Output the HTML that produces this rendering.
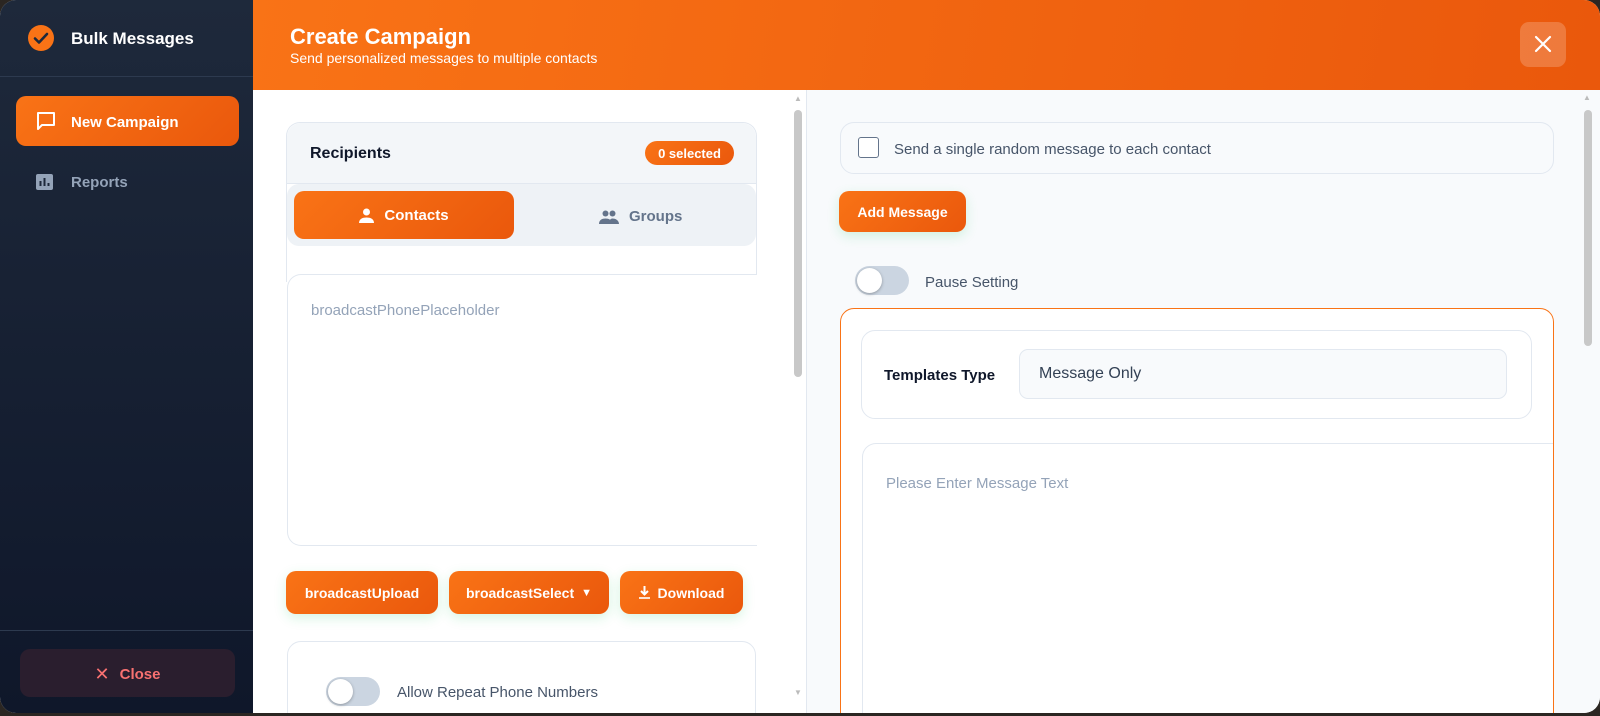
<!DOCTYPE html>
<html><head><meta charset="utf-8"><style>
*{box-sizing:border-box;margin:0;padding:0}
body{width:1600px;height:716px;overflow:hidden;background:#2b2622;font-family:"Liberation Sans",sans-serif;position:relative}
.win{position:absolute;left:0;top:0;width:1600px;height:713px;border-radius:16px;overflow:hidden;background:#fff}
.abs{position:absolute}
.side{left:0;top:0;width:253px;height:713px;background:linear-gradient(180deg,#1e293b,#0f172a)}
.og{background:linear-gradient(135deg,#f97316,#ea580c);color:#fff;font-weight:bold}
.btn{border-radius:10px;display:flex;align-items:center;justify-content:center;font-size:14px;box-shadow:0 4px 12px rgba(34,197,94,.18)}
.card{border:1px solid #e2e8f0;border-radius:14px}
.tog{width:54px;height:29px;border-radius:15px;background:#cbd5e1}
.tog::after{content:"";position:absolute;left:2px;top:2px;width:25px;height:25px;border-radius:50%;background:#fff;box-shadow:0 1px 3px rgba(0,0,0,.3)}
</style></head><body>
<div class="win">
<div class="abs side">
 <div class="abs" style="left:28px;top:25px;width:26px;height:26px;border-radius:50%;background:#f97316"><svg width="26" height="26" viewBox="0 0 26 26"><path d="M7 13.5l4 4 8-8.5" fill="none" stroke="#1e293b" stroke-width="2.6" stroke-linecap="round" stroke-linejoin="round"/></svg></div>
 <div class="abs" style="left:71px;top:29px;color:#fff;font-weight:bold;font-size:17px">Bulk Messages</div>
 <div class="abs" style="left:0;top:76px;width:253px;height:1px;background:#2d3a4f"></div>
 <div class="abs og" style="left:16px;top:96px;width:223px;height:50px;border-radius:10px;font-size:15px">
  <svg class="abs" style="left:20px;top:15px" width="20" height="20" viewBox="0 0 20 20"><path d="M2 2h16v12H6l-4 4z" fill="none" stroke="#fff" stroke-width="2" stroke-linejoin="round"/></svg>
  <span class="abs" style="left:55px;top:18px">New Campaign</span></div>
 <svg class="abs" style="left:36px;top:174px" width="17" height="16" viewBox="0 0 17 16"><rect width="17" height="16" rx="2" fill="#94a3b8"/><path d="M4.5 12V7M8.5 12V4M12.5 12V9" stroke="#1e293b" stroke-width="2"/></svg>
 <div class="abs" style="left:71px;top:174px;color:#94a3b8;font-size:15px;font-weight:bold">Reports</div>
 <div class="abs" style="left:0;top:630px;width:253px;height:1px;background:#2d3a4f"></div>
 <div class="abs" style="left:20px;top:649px;width:215px;height:48px;border-radius:10px;background:#2a1e2e;color:#f87171;font-size:15px;font-weight:bold;display:flex;align-items:center;justify-content:center;gap:10px;padding-top:3px"><span style="font-weight:normal;font-size:18px">✕</span>Close</div>
</div>
<div class="abs" style="left:253px;top:0;width:1347px;height:90px;background:linear-gradient(100deg,#f97316,#ea580c)">
 <div class="abs" style="left:37px;top:24px;color:#fff;font-weight:bold;font-size:22px">Create Campaign</div>
 <div class="abs" style="left:37px;top:50px;color:#fff;font-size:14px">Send personalized messages to multiple contacts</div>
 <div class="abs" style="left:1267px;top:22px;width:46px;height:45px;border-radius:9px;background:rgba(255,255,255,.2)"><svg width="46" height="45" viewBox="0 0 46 45"><path d="M16 15l14 14M30 15L16 29" stroke="#fff" stroke-width="2.2" stroke-linecap="round"/></svg></div>
</div>
<div class="abs" style="left:253px;top:90px;width:553px;height:623px;background:#fff">
 <div class="abs" style="left:541px;top:4px;color:#bbb;font-size:8px">▲</div>
 <div class="abs" style="left:541px;top:20px;width:8px;height:267px;border-radius:4px;background:#c8c8c8"></div>
 <div class="abs" style="left:541px;top:598px;color:#bbb;font-size:8px">▼</div>
</div>
<div class="abs" style="left:806px;top:90px;width:1px;height:623px;background:#e2e8f0"></div>
<div class="abs" style="left:286px;top:122px;width:471px;height:160px;border:1px solid #e2e8f0;border-bottom:none;border-radius:14px 14px 0 0;background:#fff"></div>
<div class="abs" style="left:287px;top:123px;width:469px;height:60px;background:#f3f6f9;border-radius:14px 14px 0 0"></div>
<div class="abs" style="left:287px;top:183px;width:470px;height:1px;background:#e2e8f0"></div>
<div class="abs" style="left:287px;top:184px;width:469px;height:62px;background:#eef2f6;border-radius:12px"></div>
<div class="abs" style="left:310px;top:145px;font-weight:bold;font-size:16px;color:#0f172a">Recipients</div>
<div class="abs og" style="left:645px;top:141px;width:89px;height:24px;border-radius:12px;font-size:13px;display:flex;align-items:center;justify-content:center">0 selected</div>
<div class="abs og btn" style="left:294px;top:191px;width:220px;height:48px;font-size:15px;box-shadow:none;gap:10px"><svg width="15" height="15" viewBox="0 0 15 15"><circle cx="7.5" cy="4" r="3.5" fill="#fff"/><path d="M0 15c0-4 3.5-5.5 7.5-5.5S15 11 15 15z" fill="#fff"/></svg>Contacts</div>
<div class="abs" style="left:599px;top:208px;display:flex;gap:10px;align-items:center;color:#64748b;font-weight:bold;font-size:15px"><svg width="20" height="14" viewBox="0 0 20 14"><circle cx="6.5" cy="3.5" r="3" fill="#64748b"/><circle cx="13.5" cy="3.5" r="3" fill="#64748b"/><path d="M0 14c0-4 3-5.5 6.5-5.5S13 10 13 14zM10 14c0-3 1-5.5 3.5-5.5S20 10 20 14z" fill="#64748b"/></svg>Groups</div>
<div class="abs card" style="left:287px;top:274px;width:470px;height:272px;border-right:none;border-radius:14px 0 0 14px;background:#fff"></div>
<div class="abs" style="left:311px;top:302px;color:#94a3b8;font-size:15px">broadcastPhonePlaceholder</div>
<div class="abs og btn" style="left:286px;top:571px;width:152px;height:43px">broadcastUpload</div>
<div class="abs og btn" style="left:449px;top:571px;width:160px;height:43px">broadcastSelect <span style="font-size:11px;margin-left:7px">▼</span></div>
<div class="abs og btn" style="left:620px;top:571px;width:123px;height:43px;gap:8px"><svg width="11" height="13" viewBox="0 0 11 13"><path d="M5.5 0v8M2 5l3.5 3.5L9 5" stroke="#fff" stroke-width="2" fill="none"/><path d="M0 12h11" stroke="#fff" stroke-width="1.6"/></svg>Download</div>
<div class="abs card" style="left:287px;top:641px;width:469px;height:100px;background:#fff"></div>
<div class="abs tog" style="left:326px;top:677px"></div>
<div class="abs" style="left:397px;top:684px;color:#475569;font-size:15px">Allow Repeat Phone Numbers</div>
<div class="abs" style="left:807px;top:90px;width:793px;height:623px;background:#f8fafc">
 <div class="abs" style="left:776px;top:3px;color:#bbb;font-size:8px">▲</div>
 <div class="abs" style="left:777px;top:20px;width:8px;height:236px;border-radius:4px;background:#c8c8c8"></div>
</div>
<div class="abs card" style="left:840px;top:122px;width:714px;height:52px;background:#f8fafc"></div>
<div class="abs" style="left:858px;top:137px;width:21px;height:21px;border:1.5px solid #64748b;border-radius:3px;background:#fff"></div>
<div class="abs" style="left:894px;top:141px;color:#475569;font-size:15px">Send a single random message to each contact</div>
<div class="abs og btn" style="left:839px;top:191px;width:127px;height:41px">Add Message</div>
<div class="abs tog" style="left:855px;top:266px"></div>
<div class="abs" style="left:925px;top:274px;color:#475569;font-size:15px">Pause Setting</div>
<div class="abs" style="left:840px;top:308px;width:714px;height:420px;border:1.5px solid #f97316;border-radius:14px;background:#fff"></div>
<div class="abs card" style="left:861px;top:330px;width:671px;height:89px;background:#fff"></div>
<div class="abs" style="left:884px;top:367px;font-weight:bold;font-size:15px;color:#0f172a">Templates Type</div>
<div class="abs" style="left:1019px;top:349px;width:488px;height:50px;border:1.5px solid #e2e8f0;border-radius:9px;background:#f8fafc;color:#334155;font-size:16px;padding:15px 19px">Message Only</div>
<div class="abs" style="left:862px;top:443px;width:691px;height:290px;border:1px solid #e2e8f0;border-right:none;border-radius:14px 0 0 0;background:#fff"></div>
<div class="abs" style="left:886px;top:475px;color:#94a3b8;font-size:15px">Please Enter Message Text</div>
</div>
</body></html>
